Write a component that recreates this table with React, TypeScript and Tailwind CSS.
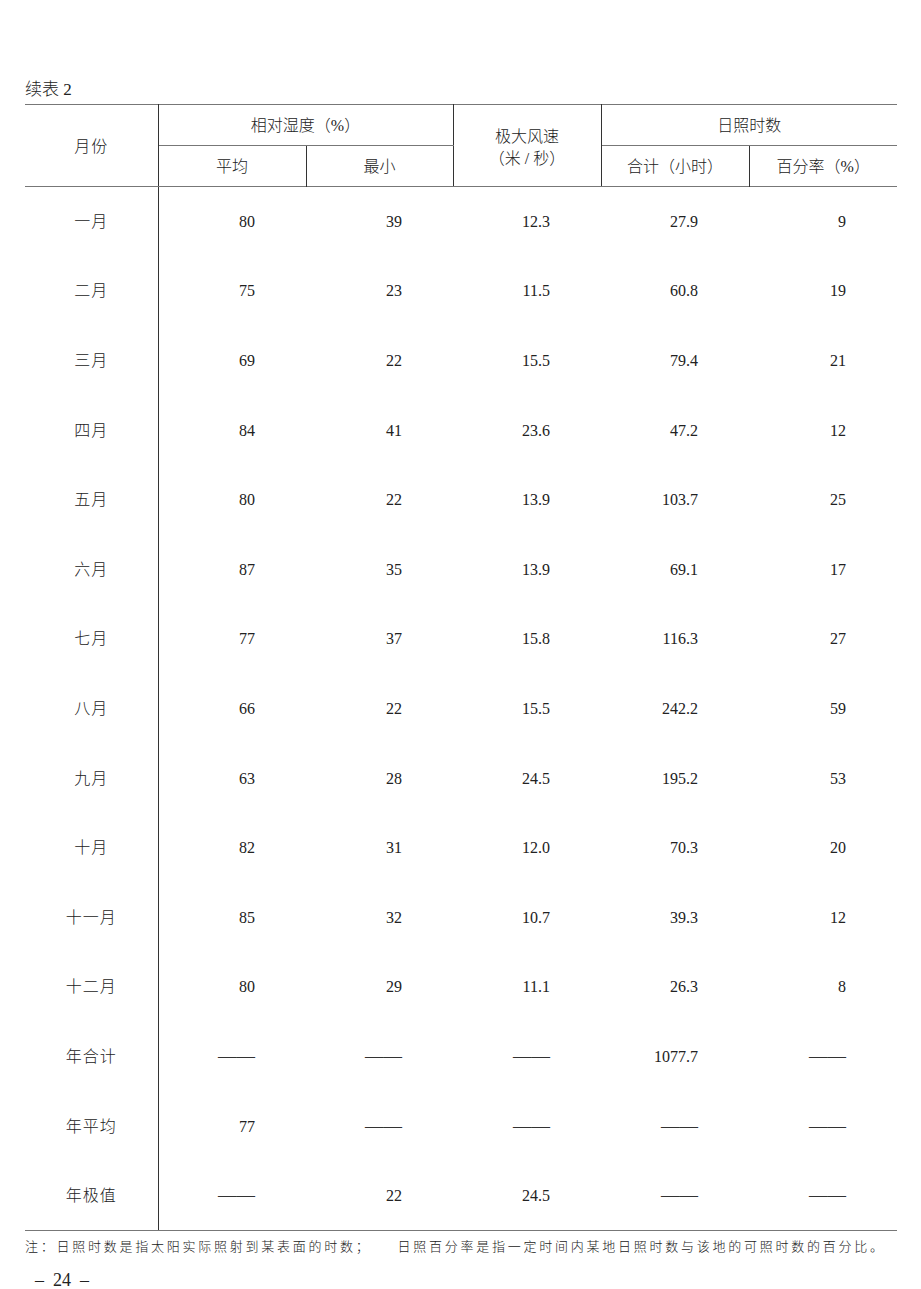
const font = { fontFamily: '"Liberation Serif", "Noto Sans CJK SC", serif' };

const rows: [string, string, string, string, string, string][] = [
  ['一月', '80', '39', '12.3', '27.9', '9'],
  ['二月', '75', '23', '11.5', '60.8', '19'],
  ['三月', '69', '22', '15.5', '79.4', '21'],
  ['四月', '84', '41', '23.6', '47.2', '12'],
  ['五月', '80', '22', '13.9', '103.7', '25'],
  ['六月', '87', '35', '13.9', '69.1', '17'],
  ['七月', '77', '37', '15.8', '116.3', '27'],
  ['八月', '66', '22', '15.5', '242.2', '59'],
  ['九月', '63', '28', '24.5', '195.2', '53'],
  ['十月', '82', '31', '12.0', '70.3', '20'],
  ['十一月', '85', '32', '10.7', '39.3', '12'],
  ['十二月', '80', '29', '11.1', '26.3', '8'],
  ['年合计', '——', '——', '——', '1077.7', '——'],
  ['年平均', '77', '——', '——', '——', '——'],
  ['年极值', '——', '22', '24.5', '——', '——'],
];

export default function App() {
  return (
    <div className="w-[921px] h-[1289px] bg-white text-[#222] font-light relative" style={font}>
      <div className="pl-[25px] pt-[78px]">
        <div className="text-[17px] leading-[24px] h-[26px]">续表 2</div>
        <table className="table-fixed border-collapse w-[872px] text-[16px]">
          <colgroup>
            <col className="w-[133px]" />
            <col className="w-[148px]" />
            <col className="w-[147px]" />
            <col className="w-[148px]" />
            <col className="w-[148px]" />
            <col className="w-[148px]" />
          </colgroup>
          <thead>
            <tr className="h-[41px] border-t border-[#777]">
              <th rowSpan={2} className="font-light border-r border-[#333] border-b border-b-[#777] pt-[2px] tracking-[1px]">月份</th>
              <th colSpan={2} className="font-light border-b border-[#777] border-r border-r-[#333] pt-[2px]">相对湿度（%）</th>
              <th rowSpan={2} className="font-light border-r border-[#333] border-b border-b-[#777] leading-[22px] pt-[5px]">
                <div>极大风速</div>
                <div>（米 / 秒）</div>
              </th>
              <th colSpan={2} className="font-light border-b border-[#777] pt-[2px]">日照时数</th>
            </tr>
            <tr className="h-[41px] border-b border-[#777]">
              <th className="font-light border-r border-[#333] pt-[2px]">平均</th>
              <th className="font-light border-r border-[#333] pt-[2px]">最小</th>
              <th className="font-light border-r border-[#333] pt-[2px]">合计（小时）</th>
              <th className="font-light pt-[2px]">百分率（%）</th>
            </tr>
          </thead>
          <tbody>
            {rows.map((r) => (
              <tr key={r[0]} className="h-[69.6px]">
                <td className="text-center border-r border-[#333] pt-[1px] tracking-[1px]">{r[0]}</td>
                {r.slice(1).map((v, i) => (
                  <td key={i} className="text-right pr-[51px] pt-[1px]">
                    {v === '——' ? <span className="text-[18.5px] text-[#333]">——</span> : v}
                  </td>
                ))}
              </tr>
            ))}
          </tbody>
        </table>
        <div className="border-t border-[#777] w-[872px]" />
        <div className="mt-[7px] text-[13px] leading-[18px] tracking-[2.75px] whitespace-nowrap">
          注：日照时数是指太阳实际照射到某表面的时数；<span className="ml-[26px]">日照百分率是指一定时间内某地日照时数与该地的可照时数的百分比。</span>
        </div>
        <div className="mt-[14px] ml-[10px] text-[18px] leading-[20px] whitespace-pre">–  24  –</div>
      </div>
    </div>
  );
}
